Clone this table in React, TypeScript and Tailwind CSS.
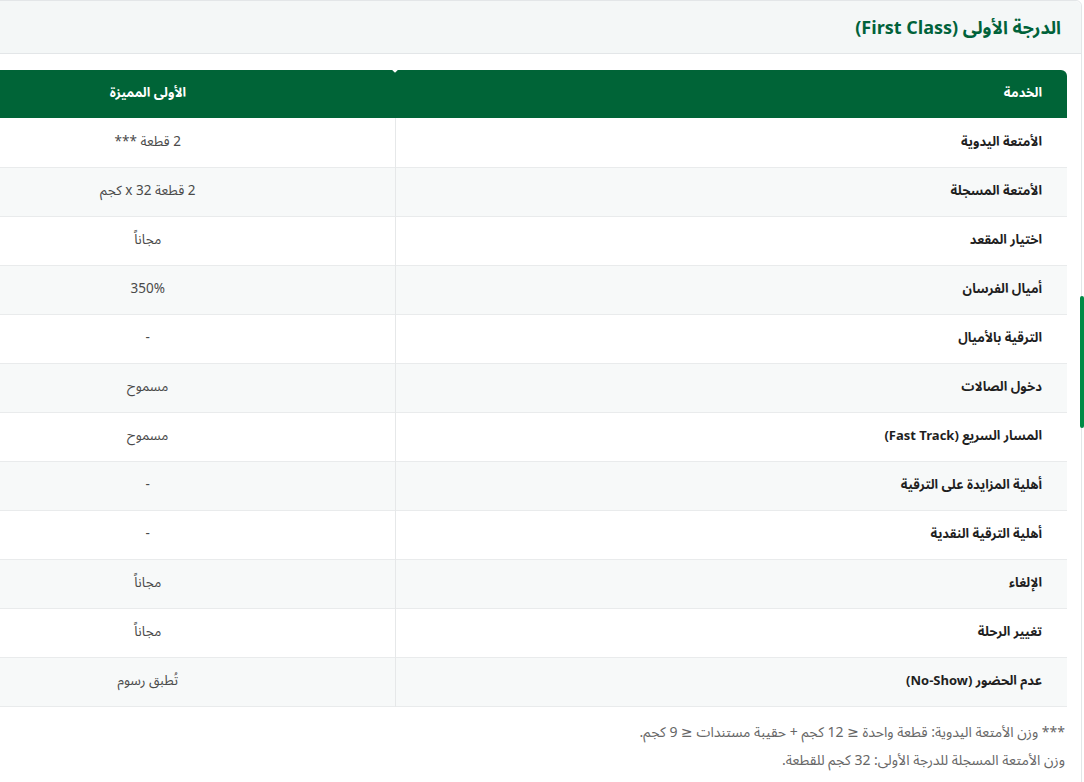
const rows = [
  { service: "الأمتعة اليدوية", value: "2 قطعة ***" },
  { service: "الأمتعة المسجلة", value: "2 قطعة 32 x كجم" },
  { service: "اختيار المقعد", value: "مجاناً" },
  { service: "أميال الفرسان", value: "350%" },
  { service: "الترقية بالأميال", value: "-" },
  { service: "دخول الصالات", value: "مسموح" },
  { service: "المسار السريع (Fast Track)", value: "مسموح" },
  { service: "أهلية المزايدة على الترقية", value: "-" },
  { service: "أهلية الترقية النقدية", value: "-" },
  { service: "الإلغاء", value: "مجاناً" },
  { service: "تغيير الرحلة", value: "مجاناً" },
  { service: "عدم الحضور (No-Show)", value: "تُطبق رسوم" },
];

export default function App() {
  return (
    <div
      dir="rtl"
      className="relative h-[782px] w-[1084px] overflow-hidden bg-white"
      style={{ fontFamily: '"Noto Sans Arabic", "DejaVu Sans", sans-serif' }}
    >
      <div className="ml-[-20px] mr-[2px] rounded-tr-[6px] border border-[#e3e6e8] bg-white">
        <div className="flex h-[53px] items-center rounded-tr-[6px] border-b border-[#e3e6e8] bg-[#f4f7f7] px-[20px] pt-[3px]">
          <h2 className="text-[18px] font-bold text-[#00623a]">
            الدرجة الأولى (First Class)
          </h2>
        </div>

        <div className="overflow-hidden pt-[16px] pb-[12px]">
          <table className="ml-[-98px] mr-[14px] w-[1166px] border-collapse text-[13px]">
            <thead>
              <tr className="h-[48px] bg-[#006437] text-white">
                <th className="relative w-[672px] rounded-tr-[6px] pr-[25px] text-right font-bold">
                  الخدمة
                  <span className="absolute left-[-2px] top-[-2px] h-[4px] w-[4px] rotate-45 bg-white" />
                </th>
                <th className="text-center font-bold">الأولى المميزة</th>
              </tr>
            </thead>
            <tbody>
              {rows.map((row, i) => (
                <tr
                  key={row.service}
                  className={`h-[49px] border-b border-[#e9ebec] ${
                    i % 2 === 1 ? "bg-[#f7f9f9]" : "bg-white"
                  }`}
                >
                  <td className="border-l border-[#e6e8e9] pr-[25px] text-right font-bold text-[#1f1f1f]">
                    {row.service}
                  </td>
                  <td className="text-center text-[13.5px] text-[#4a4a4a]">{row.value}</td>
                </tr>
              ))}
            </tbody>
          </table>

          <div className="mt-[16px] space-y-[8px] pr-[16px] text-[14px] leading-[20px] text-[#666]">
            <p>*** وزن الأمتعة اليدوية: قطعة واحدة ≤ 12 كجم + حقيبة مستندات ≤ 9 كجم.</p>
            <p>وزن الأمتعة المسجلة للدرجة الأولى: 32 كجم للقطعة.</p>
          </div>
        </div>
      </div>

      <div className="absolute left-[1080px] top-[296px] h-[132px] w-[4px] rounded-full bg-[#008a45]" />
    </div>
  );
}
